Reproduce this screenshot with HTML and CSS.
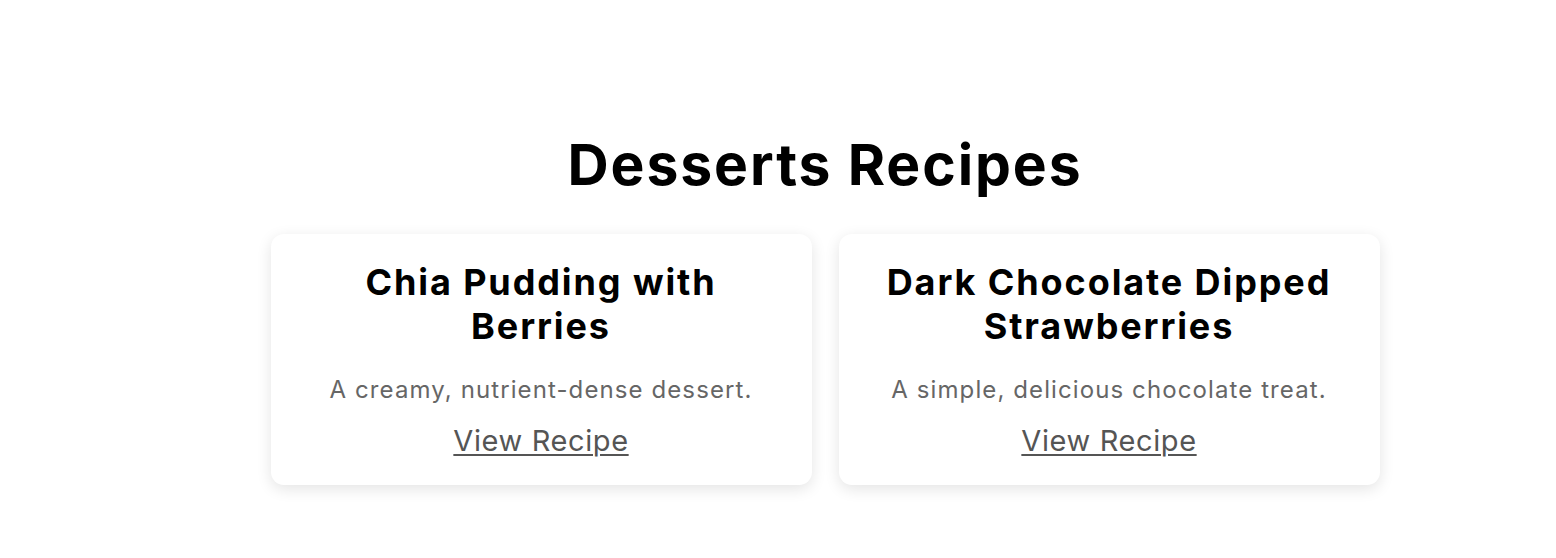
FILE: index.html
```html
<!DOCTYPE html>
<html lang="en">
<head>
<meta charset="utf-8">
<title>Desserts Recipes</title>
<link rel="stylesheet" href="styles.css">
</head>
<body>
<main class="page">
  <section class="recipes">
    <h1 class="recipes-title">Desserts Recipes</h1>
    <div class="recipe-grid">
      <article class="recipe-card">
        <h3 class="recipe-name">Chia Pudding with Berries</h3>
        <p class="recipe-desc">A creamy, nutrient-dense dessert.</p>
        <a class="recipe-link" href="#">View Recipe</a>
      </article>
      <article class="recipe-card">
        <h3 class="recipe-name">Dark Chocolate Dipped Strawberries</h3>
        <p class="recipe-desc">A simple, delicious chocolate treat.</p>
        <a class="recipe-link" href="#">View Recipe</a>
      </article>
    </div>
  </section>
</main>
</body>
</html>
```

FILE: styles.css
```css
* { box-sizing: border-box; }
html, body { margin: 0; padding: 0; background: #ffffff; }
body {
  font-family: Inter, "Open Sans", "DejaVu Sans", sans-serif;
  color: #000;
}
.page {
  padding: 131px 0 74px 94px;
}
.recipes {
  max-width: 1109px;
  margin: 0 auto;
}
.recipes-title {
  margin: 0 0 35px;
  font-size: 57px;
  line-height: 1.2;
  font-weight: 700;
  letter-spacing: 1.9px;
  text-align: center;
}
.recipe-grid {
  display: grid;
  grid-template-columns: 1fr 1fr;
  gap: 27px;
}
.recipe-card {
  display: flex;
  flex-direction: column;
  align-items: center;
  text-align: center;
  background: #fff;
  border-radius: 13px;
  box-shadow: 0 4px 15px rgba(0, 0, 0, 0.11);
  padding: 27px 40px 23px;
}
.recipe-name {
  margin: 0;
  font-size: 36px;
  line-height: 1.2;
  font-weight: 700;
  letter-spacing: 1.9px;
}
.recipe-desc {
  margin: 24px 0 0;
  font-size: 24px;
  line-height: 1.5;
  color: #666;
  letter-spacing: 1.1px;
}
.recipe-link {
  margin-top: 11px;
  font-size: 29px;
  line-height: 1.5;
  color: #555;
  letter-spacing: 0.6px;
  text-decoration: underline;
  text-underline-offset: 3px;
  text-decoration-thickness: 2px;
}
```
